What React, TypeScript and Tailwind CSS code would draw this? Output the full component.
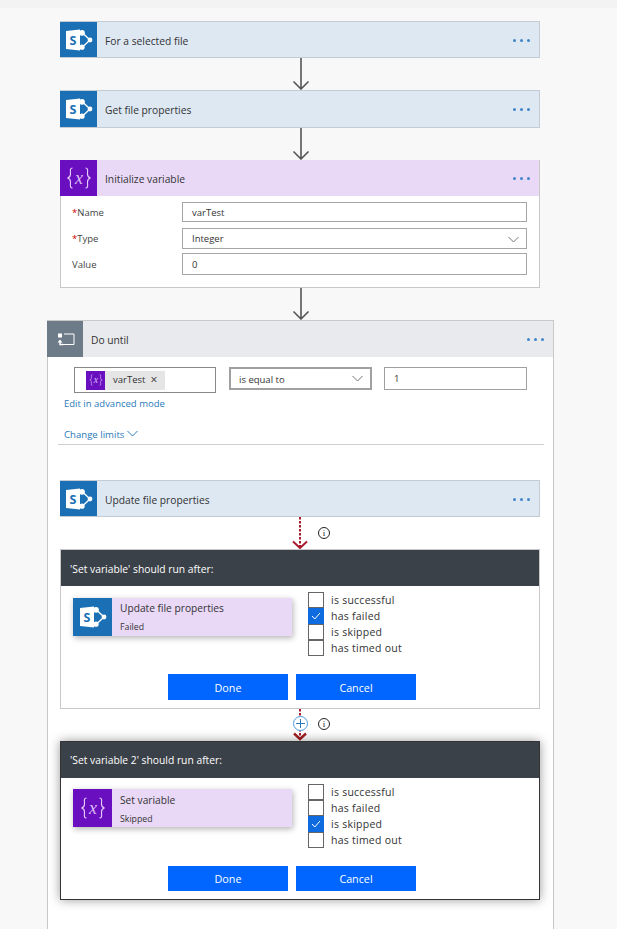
import React from "react";

function SpIcon() {
  return (
    <svg width="28" height="24" viewBox="0 0 28 24">
      <path d="M17 4.5 L25 12 L17 19.5" fill="none" stroke="#fff" strokeWidth="1.3" />
      <circle cx="17" cy="4.8" r="2.9" fill="#fff" />
      <circle cx="25" cy="12" r="2.4" fill="#fff" />
      <circle cx="17" cy="19.2" r="2.6" fill="#fff" />
      <path d="M1 3 L15 1.5 V22.5 L1 21 Z" fill="#fff" />
      <text x="8" y="16.5" textAnchor="middle" fontSize="12.5" fontWeight="700" fill="#1b70b5" fontFamily="'Open Sans', sans-serif">S</text>
    </svg>
  );
}

function VarIcon({ small = false }: { small?: boolean }) {
  const s = small ? 14 : 26;
  return (
    <svg width={s} height={s} viewBox="0 0 26 26">
      <path d="M6.5 3 C3.5 3 4.5 6 4.5 9 C4.5 11.5 3.5 12.5 1.5 13 C3.5 13.5 4.5 14.5 4.5 17 C4.5 20 3.5 23 6.5 23" fill="none" stroke="#e8d0fb" strokeWidth="1.1" />
      <path d="M19.5 3 C22.5 3 21.5 6 21.5 9 C21.5 11.5 22.5 12.5 24.5 13 C22.5 13.5 21.5 14.5 21.5 17 C21.5 20 22.5 23 19.5 23" fill="none" stroke="#e8d0fb" strokeWidth="1.1" />
      <text x="13" y="18.5" textAnchor="middle" fontSize="18" fontStyle="italic" fill="#dcbcf7" fontFamily="'Liberation Serif', serif">x</text>
    </svg>
  );
}

function Dots({ className = "" }: { className?: string }) {
  return (
    <div className={`flex gap-[4px] mt-[1px] ${className}`}>
      <span className="w-[3px] h-[3px] rounded-full bg-[#3f86c9]" />
      <span className="w-[3px] h-[3px] rounded-full bg-[#3f86c9]" />
      <span className="w-[3px] h-[3px] rounded-full bg-[#3f86c9]" />
    </div>
  );
}

function Card({ title, tall }: { title: string; tall?: boolean }) {
  return (
    <div className={`flex items-center ${tall ? "h-[38px]" : "h-[37px]"} border border-[#c3cbd3] bg-[#dde8f3]`}>
      <div className="w-[37px] h-full -ml-px bg-[#1b70b5] flex items-center justify-center shrink-0">
        <SpIcon />
      </div>
      <span className="ml-[8px] pt-[4px] text-[10.25px] text-[#333]">{title}</span>
      <Dots className="ml-auto mr-[9px]" />
    </div>
  );
}

function Arrow() {
  return (
    <div className="h-[32px] flex justify-center">
      <svg width="18" height="32" viewBox="0 0 18 32" className="ml-[2px]">
        <path d="M9 0 V31 M1.5 23.5 L9 31 L16.5 23.5" fill="none" stroke="#555" strokeWidth="1.6" />
      </svg>
    </div>
  );
}

function Field({ label, req, value, chevron, h, className = "" }: { label: string; req?: boolean; value: string; chevron?: boolean; h: string; className?: string }) {
  return (
    <div className={`flex items-center ${className}`}>
      <div className="w-[121px] pl-[11px] pt-[2px] text-[9.5px] text-[#444]">
        {req && <span className="text-[#c00]">*</span>}
        {label}
      </div>
      <div className={`w-[345px] ${h} border border-[#a6a6a6] bg-white flex items-center pl-[9px] pr-[7px] pt-[2px] text-[9.5px] text-[#333]`}>
        {value}
        {chevron && <Chevron className="ml-auto" />}
      </div>
    </div>
  );
}

function Chevron({ className = "", color = "#777" }: { className?: string; color?: string }) {
  return (
    <svg width="11" height="7" viewBox="0 0 11 7" className={className}>
      <path d="M0.5 1 L5.5 6 L10.5 1" fill="none" stroke={color} strokeWidth="1" />
    </svg>
  );
}

function Check({ on, label }: { on?: boolean; label: string }) {
  return (
    <div className="flex items-center h-[16px]">
      <span className={`w-[16px] h-[16px] border flex items-center justify-center ${on ? "bg-[#0f6be0] border-[#0f6be0]" : "bg-white border-[#666]"}`}>
        {on && (
          <svg width="10" height="8" viewBox="0 0 10 8">
            <path d="M1 4 L3.8 7 L9 1" fill="none" stroke="#fff" strokeWidth="1" />
          </svg>
        )}
      </span>
      <span className="ml-[7px] pt-[2px] text-[10.5px] tracking-[0.25px] text-[#333]">{label}</span>
    </div>
  );
}

function RunAfter({ title, icon, name, status, checked, focus }: { title: string; icon: React.ReactNode; name: string; status: string; checked: number; focus?: boolean }) {
  const labels = ["is successful", "has failed", "is skipped", "has timed out"];
  return (
    <div className={`relative bg-white border ${focus ? "h-[159px] border-[#333] shadow-[0_0_10px_rgba(0,0,0,0.4)]" : "h-[160px] border-[#c8c8c8]"}`}>
      <div className={`h-[36px] bg-[#3b4148] flex items-center pl-[9px] ${focus ? "pt-[2px]" : "pt-[4px]"} text-[10.3px] text-white`}>{title}</div>
      <div className="flex pl-[12px] pt-[5px]">
        <div className={`w-[219px] h-[38px] ${focus ? "mt-[6px]" : "mt-[7px]"} flex bg-[#e9d9f7] shadow-[1px_2px_6px_rgba(0,0,0,0.3)]`}>
          {icon}
          <div className="pl-[8px] text-[#333]">
            <div className={`text-[10.2px] leading-[14px] ${focus ? "mt-[4px]" : "mt-[3px]"}`}>{name}</div>
            <div className={`text-[8.75px] leading-[12px] ${focus ? "mt-[6px]" : "mt-[6px]"}`}>{status}</div>
          </div>
        </div>
        <div className="ml-[16px] mt-[1px] flex flex-col">
          {labels.map((l, i) => (
            <Check key={l} label={l} on={i === checked} />
          ))}
        </div>
      </div>
      <div className="flex justify-center gap-[8px] mt-[18px] pr-[16px]">
        <button className={`w-[120px] ${focus ? "h-[25px]" : "h-[26px]"} pt-[2px] bg-[#0066ff] text-white text-[10.75px] font-medium`}>Done</button>
        <button className={`w-[120px] ${focus ? "h-[25px]" : "h-[26px]"} pt-[2px] bg-[#0066ff] text-white text-[10.75px] font-medium`}>Cancel</button>
      </div>
    </div>
  );
}

function Info() {
  return (
    <span className="w-[12px] h-[12px] rounded-full border border-[#222] flex items-center justify-center text-[9px] leading-none text-[#222] font-['Liberation_Serif',serif] bg-white">i</span>
  );
}

export default function App() {
  return (
    <div className="w-[617px] h-[929px] overflow-hidden bg-[#f8f8f8] font-['Open_Sans','Noto_Sans',sans-serif]">
      <div className="h-[8px] bg-[#f3f3f3]" />
      <div className="pt-[13px] flex flex-col">
        <div className="ml-[60px] w-[480px]">
          <Card title="For a selected file" />
          <Arrow />
          <Card title="Get file properties" tall />
          <Arrow />
          <div className="h-[128px] border border-[#c8c8c8] bg-white">
            <div className="h-[36px] flex items-center bg-[#e9d9f7] -mt-px">
              <div className="w-[37px] h-full -ml-px bg-[#6a0fbf] flex items-center justify-center">
                <VarIcon />
              </div>
              <span className="ml-[8px] pt-[4px] text-[10.25px] text-[#333]">Initialize variable</span>
              <Dots className="ml-auto mr-[9px]" />
            </div>
            <div className="pt-[6px] flex flex-col">
              <Field label="Name" req value="varTest" h="h-[20px]" />
              <Field label="Type" req value="Integer" chevron h="h-[21px]" className="mt-[6px]" />
              <Field label="Value" value="0" h="h-[22px]" className="mt-[4px]" />
            </div>
          </div>
          <Arrow />
        </div>

        <div className="ml-[47px] w-[507px] h-[640px] border border-[#c8c8c8] bg-white">
          <div className="h-[36px] bg-[#e8eaed] flex items-center">
            <div className="w-[36px] h-full -ml-px bg-[#6d7a88] flex items-center justify-center">
              <svg width="20" height="16" viewBox="0 0 20 16">
                <path d="M9 3 H19 V13.5 H8" fill="none" stroke="#fff" strokeWidth="1" />
                <rect x="3" y="2.5" width="4" height="4" fill="#fff" />
                <path d="M2.5 11.5 L5 8.5 L7.5 11.5 Z" fill="#fff" />
                <path d="M5 11 V13.5 H8" fill="none" stroke="#fff" strokeWidth="1.4" />
              </svg>
            </div>
            <span className="ml-[8px] pt-[4px] text-[10.25px] text-[#333]">Do until</span>
            <Dots className="ml-auto mr-[9px]" />
          </div>

          <div className="pl-[26px] pt-[10px] flex items-start">
            <div className="w-[142px] h-[26px] border border-[#888] flex items-center pl-[11px]">
              <div className="h-[19px] flex items-center bg-[#e5e5e5] pr-[8px]">
                <span className="w-[19px] h-[19px] bg-[#6a0fbf] flex items-center justify-center">
                  <VarIcon small />
                </span>
                <span className="ml-[8px] text-[9.5px] text-[#333]">varTest</span>
                <span className="ml-[5px] text-[12px] text-[#333] leading-none">×</span>
              </div>
            </div>
            <div className="ml-[13px] w-[143px] h-[23px] border-2 border-[#a0a0a0] flex items-center pl-[8px] pr-[7px] text-[9.5px] text-[#333]">
              <span className="pt-[3px]">is equal to</span>
              <Chevron className="ml-auto" />
            </div>
            <div className="ml-[12px] w-[143px] h-[23px] border border-[#a0a0a0] flex items-center pl-[9px] pt-[2px] text-[9.5px] text-[#333]">1</div>
          </div>
          <div className="pl-[16px] mt-[4px] text-[9.5px] leading-[14px] text-[#2a7ab8]">Edit in advanced mode</div>
          <div className="pl-[16px] mt-[17px] flex items-center gap-[3px] text-[9.6px] leading-[14px] text-[#2a7ab8]">
            Change limits
            <Chevron color="#2a7ab8" className="-mt-[3px]" />
          </div>
          <div className="ml-[10px] w-[486px] mt-[2px] h-px bg-[#cfcfcf]" />

          <div className="ml-[12px] w-[480px] mt-[35px]">
            <Card title="Update file properties" />
            <div className="relative h-[32px] flex justify-center">
              <svg width="18" height="32" viewBox="0 0 18 32" className="-ml-[1px]">
                <path d="M9 0 V30" fill="none" stroke="#a81c30" strokeWidth="2" strokeDasharray="2.5 1.5" />
                <path d="M2 24.5 L9 31 L16 24.5" fill="none" stroke="#a81c30" strokeWidth="2" />
              </svg>
              <span className="absolute left-[258px] top-[10px]"><Info /></span>
            </div>
            <RunAfter
              title="'Set variable' should run after:"
              icon={<div className="w-[39px] bg-[#1b70b5] flex items-center justify-center shrink-0"><SpIcon /></div>}
              name="Update file properties"
              status="Failed"
              checked={1}
            />
            <div className="relative h-[32px] flex justify-center">
              <svg width="18" height="32" viewBox="0 0 18 32" className="-ml-[1px]">
                <path d="M9 0 V30" fill="none" stroke="#a81c30" strokeWidth="2" strokeDasharray="2.5 1.5" />
                <path d="M3 24.5 L9 30 L15 24.5" fill="none" stroke="#a02020" strokeWidth="2.4" />
              </svg>
              <span className="absolute left-[233px] top-[7px] w-[15px] h-[15px] rounded-full border border-[#4a9adf] bg-white flex items-center justify-center">
                <svg width="9" height="9" viewBox="0 0 9 9"><path d="M4.5 0 V9 M0 4.5 H9" stroke="#2a7ab8" strokeWidth="1" /></svg>
              </span>
              <span className="absolute left-[258px] top-[9px]"><Info /></span>
            </div>
            <RunAfter
              focus
              title="'Set variable 2' should run after:"
              icon={<div className="w-[39px] bg-[#6a0fbf] flex items-center justify-center shrink-0"><VarIcon /></div>}
              name="Set variable"
              status="Skipped"
              checked={2}
            />
          </div>
        </div>
      </div>
    </div>
  );
}
